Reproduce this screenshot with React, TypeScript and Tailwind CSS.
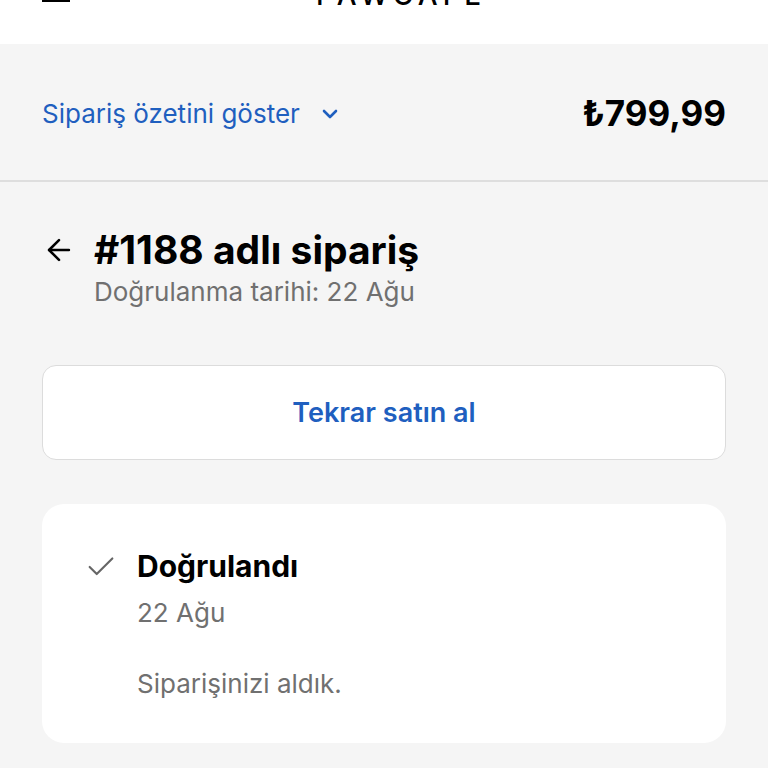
import { ChevronDown, ArrowLeft, Check } from 'lucide-react';

export default function App() {
  return (
    <div className="min-h-[768px] bg-[#f5f5f5] font-['Inter',sans-serif] text-black">
      <header className="relative h-[44px] overflow-hidden bg-white">
        <span className="absolute left-[42px] top-0 h-[2px] w-[28px] bg-black" />
        <div className="-mt-[19px] flex justify-center pl-[34px]">
          <span className="text-[28px] font-medium leading-none tracking-[0.18em]">PAWCAFE</span>
        </div>
      </header>

      <div className="flex h-[138px] items-center justify-between border-b-2 border-[#dedede] px-[42px] pt-[3px]">
        <button className="flex items-center gap-[18px] text-[26px] leading-none text-[#1f5fbf]">
          <span>Sipariş özetini göster</span>
          <ChevronDown size={24} strokeWidth={2.6} />
        </button>
        <span className="text-[35px] font-bold leading-none">₺799,99</span>
      </div>

      <div className="px-[42px] pt-[44px]">
        <div className="flex items-center gap-[18px]">
          <ArrowLeft size={34} strokeWidth={1.8} />
          <h1 className="text-[39px] font-bold leading-tight">#1188 adlı sipariş</h1>
        </div>
        <p className="ml-[52px] mt-[1px] text-[26px] leading-tight text-[#707070]">Doğrulanma tarihi: 22 Ağu</p>

        <button className="mt-[57px] flex h-[95px] w-full items-center justify-center rounded-[14px] border border-[#dcdcdc] bg-white text-[27px] font-semibold text-[#1f5fbf]">
          Tekrar satın al
        </button>

        <div className="mt-[44px] rounded-[22px] bg-white px-[42px] pb-[42px] pt-[44px]">
          <div className="flex items-center gap-[19px]">
            <Check size={34} strokeWidth={1.5} className="text-[#666]" />
            <span className="text-[30px] font-bold leading-tight">Doğrulandı</span>
          </div>
          <div className="ml-[53px] mt-[11px] text-[26px] leading-tight text-[#707070]">22 Ağu</div>
          <div className="ml-[53px] mt-[39px] text-[26px] leading-tight text-[#707070]">Siparişinizi aldık.</div>
        </div>
      </div>
    </div>
  );
}
